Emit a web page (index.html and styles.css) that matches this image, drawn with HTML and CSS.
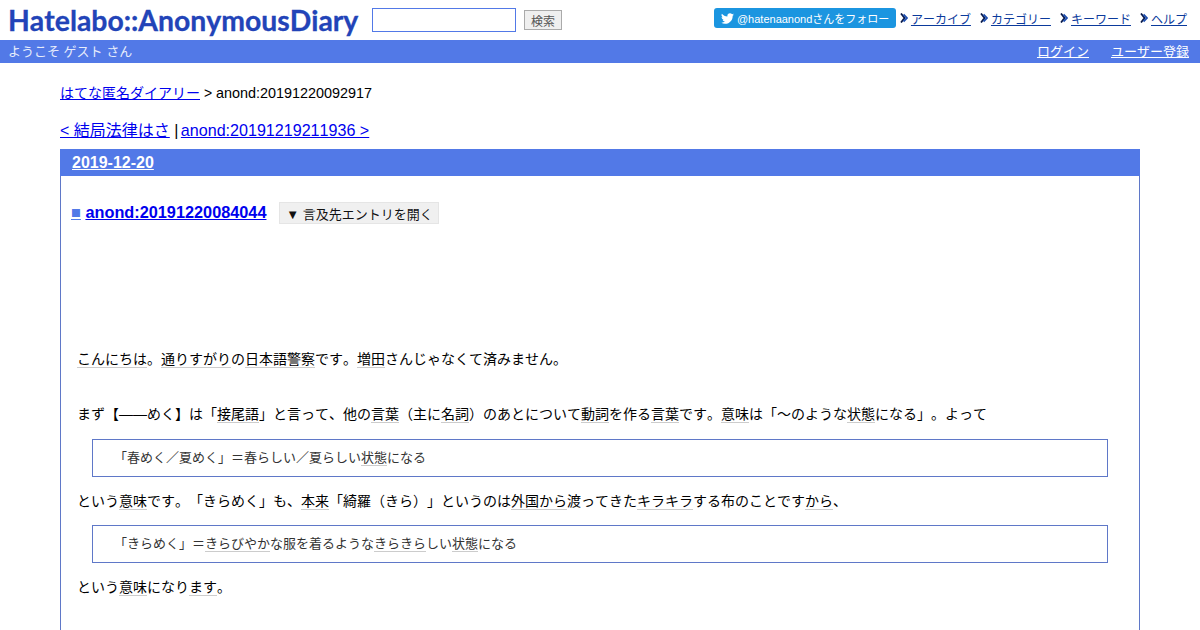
FILE: index.html
```html
<!DOCTYPE html>
<html lang="ja">
<head>
<meta charset="utf-8">
<title>はてな匿名ダイアリー</title>
<link rel="stylesheet" href="styles.css">
</head>
<body>
<header class="top">
  <a class="logo" href="#">Hatelabo::AnonymousDiary</a>
  <form class="search">
    <input class="search-input" type="text">
    <button class="search-btn" type="button">検索</button>
  </form>
  <nav class="top-nav">
    <a class="tw-btn" href="#"><svg class="tw-icon" viewBox="0 0 24 24"><path fill="#fff" d="M23.95 4.57a10 10 0 0 1-2.82.77 4.96 4.96 0 0 0 2.16-2.72c-.95.55-2 .96-3.13 1.18a4.92 4.92 0 0 0-8.38 4.48C7.69 8.1 4.07 6.13 1.64 3.16a4.9 4.9 0 0 0-.66 2.47c0 1.7.87 3.2 2.19 4.1a4.9 4.9 0 0 1-2.23-.61v.06a4.92 4.92 0 0 0 3.95 4.83 4.9 4.9 0 0 1-2.22.08 4.93 4.93 0 0 0 4.6 3.42A9.87 9.87 0 0 1 0 19.54a13.94 13.94 0 0 0 7.55 2.21c9.05 0 14-7.5 14-13.98 0-.21 0-.42-.02-.63a9.94 9.94 0 0 0 2.46-2.55z"/></svg>@hatenaanondさんをフォロー</a>
    <div class="nav-item"><svg class="chev" viewBox="0 0 8 10"><path fill="none" stroke="#0a1a4a" stroke-width="1.8" d="M1 .5 4.5 5 1 9.5"/><path fill="none" stroke="#1f4fb0" stroke-width="1.8" d="M3.5 1.5 7 5 3.5 8.5"/></svg><a href="#">アーカイブ</a></div>
    <div class="nav-item"><svg class="chev" viewBox="0 0 8 10"><path fill="none" stroke="#0a1a4a" stroke-width="1.8" d="M1 .5 4.5 5 1 9.5"/><path fill="none" stroke="#1f4fb0" stroke-width="1.8" d="M3.5 1.5 7 5 3.5 8.5"/></svg><a href="#">カテゴリー</a></div>
    <div class="nav-item"><svg class="chev" viewBox="0 0 8 10"><path fill="none" stroke="#0a1a4a" stroke-width="1.8" d="M1 .5 4.5 5 1 9.5"/><path fill="none" stroke="#1f4fb0" stroke-width="1.8" d="M3.5 1.5 7 5 3.5 8.5"/></svg><a href="#">キーワード</a></div>
    <div class="nav-item"><svg class="chev" viewBox="0 0 8 10"><path fill="none" stroke="#0a1a4a" stroke-width="1.8" d="M1 .5 4.5 5 1 9.5"/><path fill="none" stroke="#1f4fb0" stroke-width="1.8" d="M3.5 1.5 7 5 3.5 8.5"/></svg><a href="#">ヘルプ</a></div>
  </nav>
</header>
<div class="bar">
  <span>ようこそ ゲスト さん</span>
  <div class="bar-links"><a href="#">ログイン</a><a href="#">ユーザー登録</a></div>
</div>
<main class="main">
  <p class="crumb"><a href="#">はてな匿名ダイアリー</a> &gt; <span class="crumb-id">anond:20191220092917</span></p>
  <p class="pager"><a href="#">&lt; 結局法律はさ</a> | <a class="pager-next" href="#">anond:20191219211936 &gt;</a></p>
  <section class="day">
    <h2 class="day-head"><a href="#">2019-12-20</a></h2>
    <div class="day-body">
      <div class="title-row">
        <h3 class="title"><a class="sq" href="#">■</a> <a href="#">anond:20191220084044</a></h3>
        <button class="cite-btn" type="button">▼ 言及先エントリを開く</button>
      </div>
      <p class="para first"><a class="kw">こんにちは</a>。<a class="kw">通りすがり</a>の<a class="kw">日本語</a><a class="kw">警察</a>です。<a class="kw">増田</a>さんじゃなくて済みません。</p>
      <p class="para second">まず【――めく】は「<a class="kw">接尾語</a>」と言って、他の<a class="kw">言葉</a>（主に<a class="kw">名詞</a>）のあとについて<a class="kw">動詞</a>を作る<a class="kw">言葉</a>です。<a class="kw">意味</a>は「～のような<a class="kw">状態</a>になる」。よって</p>
      <blockquote class="quote">「春めく／夏めく」＝春らしい／夏らしい<a class="kw">状態</a>になる</blockquote>
      <p class="para">という<a class="kw">意味</a>です。「きらめく」も、<a class="kw">本来</a>「綺羅（きら）」というのは<a class="kw">外国</a><a class="kw">から</a>渡ってきた<a class="kw">キラキラ</a>する布のことです<a class="kw">から</a>、</p>
      <blockquote class="quote">「きらめく」＝<a class="kw">きらびやか</a>な服を着るような<a class="kw">きらきら</a>しい<a class="kw">状態</a>になる</blockquote>
      <p class="para">という<a class="kw">意味</a>になり<a class="kw">ます</a>。</p>
    </div>
  </section>
</main>
</body>
</html>
```
FILE: styles.css
```css
* { box-sizing: border-box; }
html, body { margin: 0; padding: 0; height: 630px; overflow: hidden; }
body { background: #fff; color: #000; font-family: "Liberation Sans", "Noto Sans CJK JP", sans-serif; font-size: 14px; text-spacing-trim: space-all; font-kerning: none; }
a { color: #0000ee; }
.top { height: 40px; display: flex; align-items: flex-start; padding-left: 8px; }
.logo { font-family: Lato, sans-serif; font-weight: 700; font-size: 28.35px; line-height: 40px; height: 40px; color: #2244b8; text-decoration: none; width: 364px; white-space: nowrap; -webkit-text-stroke: 0.3px #2244b8; }
.search { display: flex; align-items: center; gap: 8px; margin-top: 8px; }
.search-input { width: 144px; height: 24px; border: 1px solid #5279e7; padding: 0; background: #fff; }
.search-btn { width: 38px; height: 20px; padding: 0; border: 1px solid #aaa; background: #efefef; color: #555; font: 12px "Liberation Sans", "Noto Sans CJK JP", sans-serif; }
.top-nav { margin-left: auto; display: flex; align-items: center; gap: 9px; height: 20px; margin-top: 8px; padding-right: 13px; font-size: 12px; }
.tw-btn { display: flex; align-items: center; height: 20px; width: 182px; margin-right: -5px; padding-left: 7px; background: #1b95e0; border-radius: 3px; color: #fff; text-decoration: none; font-size: 11px; white-space: nowrap; }
.tw-icon { width: 13px; height: 13px; margin-right: 3px; flex: none; }
.nav-item { display: flex; align-items: center; gap: 3px; white-space: nowrap; }
.nav-item a { color: #0b3a9c; }
.chev { width: 8px; height: 10px; flex: none; }
.bar { height: 23px; background: #5279e7; color: #e6ecfb; display: flex; justify-content: space-between; align-items: center; padding: 0 11px 2px 8px; font-size: 13px; }
.bar-links { display: flex; gap: 22px; }
.bar-links a { color: #fff; }
.main { padding: 0 60px; }
.crumb { margin: 0; padding-top: 21px; height: 58px; line-height: 18px; font-size: 14px; }
.crumb-id { font-size: 14.4px; }
.pager { margin: 0; height: 28px; line-height: 18px; font-size: 16px; }
.pager-next { font-size: 16.1px; margin-left: -2px; }
.day { border: 1px solid #5f78c8; border-width: 0 1px; height: 481px; }
.day-head { margin: 0 -1px; height: 27px; background: #5279e7; padding: 1px 0 0 12px; font-size: 16px; line-height: 26px; }
.day-head a { color: #fff; }
.day-body { padding: 0 16px; }
.title-row { display: flex; align-items: center; margin-left: -6px; padding-top: 26px; height: 48px; }
.title { margin: 0 0 2px; font-size: 16.3px; line-height: 22px; white-space: nowrap; }
.sq { color: #5279e7; font-size: 16.4px; }
.cite-btn { margin-left: 13px; width: 160px; height: 22px; border: 1px solid #e5e5e5; background: #f0f0f0; color: #111; padding: 0; font: 13px "Liberation Sans", "Noto Sans CJK JP", sans-serif; }
.para { margin: 0; font-size: 14px; line-height: 24px; white-space: nowrap; }
.first { margin-top: 123px; }
.second { margin-top: 31px; }
.quote { margin: 13px 15px 12px; height: 38px; border: 1px solid #5f78c8; padding-left: 21px; line-height: 36px; font-size: 13px; color: #333; white-space: nowrap; }
.quote + .para + .quote { margin-top: 12px; }
.kw { color: inherit; border-bottom: 1px solid #ccc; }
```
